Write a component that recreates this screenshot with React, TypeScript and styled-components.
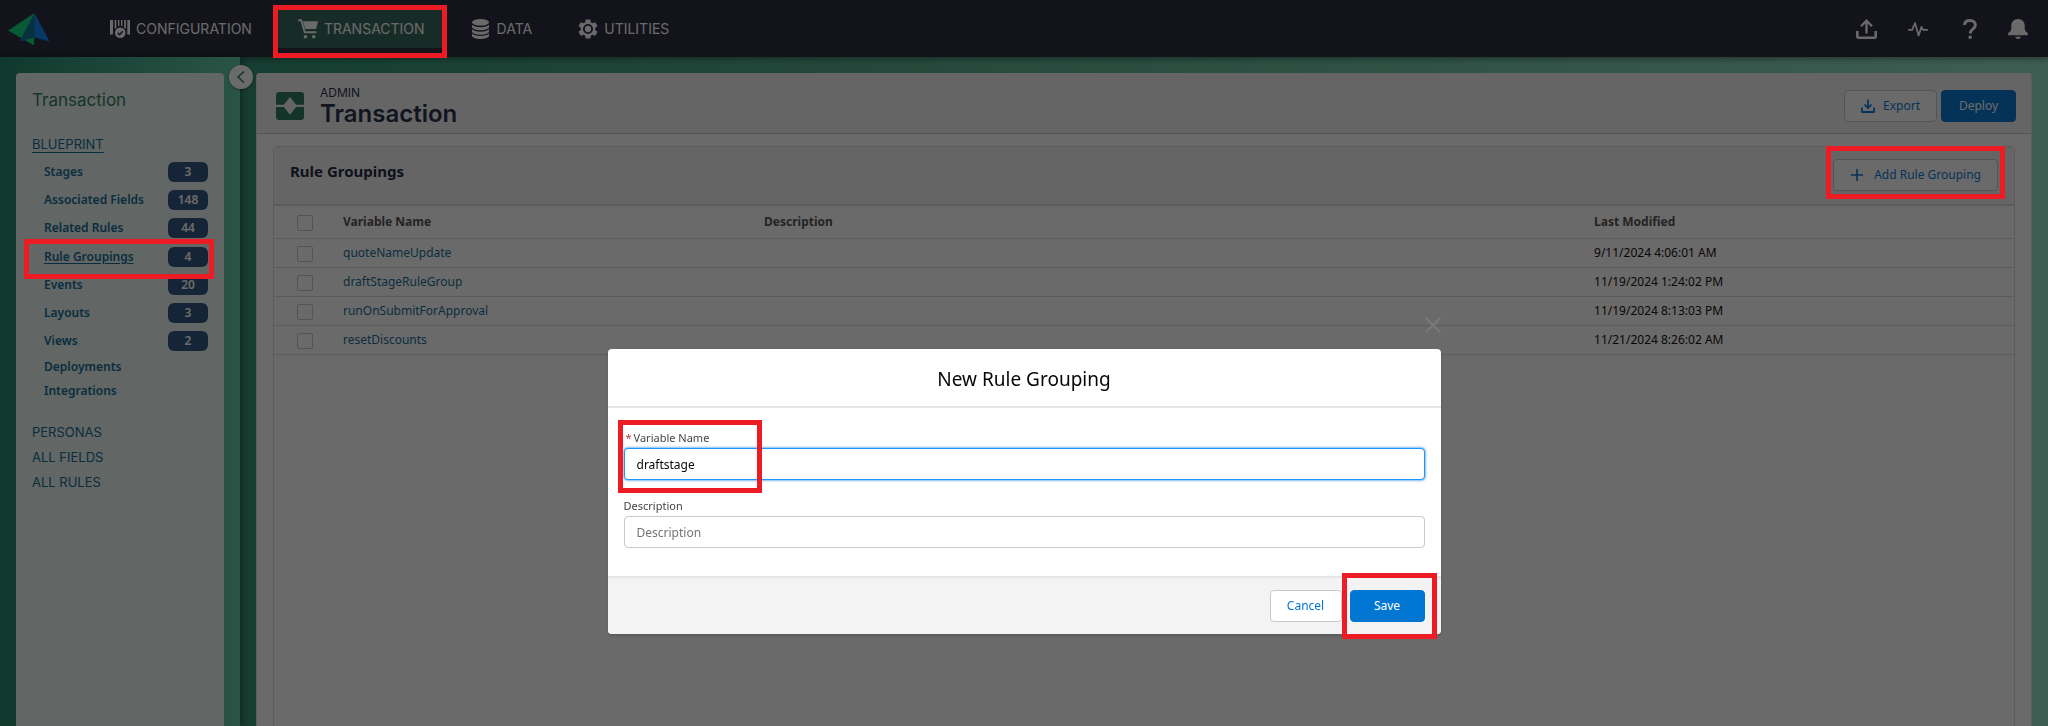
import React, { useState } from 'react';
import styled, { createGlobalStyle, css } from 'styled-components';

const textFont = '"Noto Sans", "Open Sans", sans-serif';
const brandFont = 'Inter, "Open Sans", sans-serif';

const color = {
  navy: '#21263a',
  link: '#0c6894',
  brand: '#0176d3',
  green: '#27795e',
  line: '#dddbda',
  control: '#c9c9c9',
  grey: '#f3f3f3',
  mark: '#ed1c24',
};

const GlobalStyle = createGlobalStyle`
  *, *::before, *::after { box-sizing: border-box; }
  body { margin: 0; font: 12px/16px ${textFont}; color: #080707; }
  h1, h2, h3, p, ul { margin: 0; padding: 0; font-weight: inherit; }
  ul { list-style: none; }
  button, input { font: inherit; margin: 0; }
  a { text-decoration: none; color: inherit; }
`;

const Page = styled.div`
  height: 100vh;
  display: flex;
  flex-direction: column;
  overflow: hidden;
`;

const Mark = styled.span<{ $inset: string }>`
  position: absolute;
  inset: ${p => p.$inset};
  border: 5px solid ${color.mark};
  z-index: 20;
  pointer-events: none;
`;

const FieldMark = styled(Mark)`
  width: 144px;
`;

/* Top bar */

const TopBar = styled.header`
  position: relative;
  flex: none;
  display: flex;
  align-items: center;
  height: 57px;
  padding: 0 20px 0 8px;
  background: ${color.navy};
  color: #fff;
  box-shadow: 0 2px 6px rgba(0, 0, 0, 0.4);
`;

const Logo = styled.a`
  display: flex;
  width: 82px;
`;

const MainNav = styled.nav`
  display: flex;
  gap: 7px;
  flex: 1;
`;

const NavLink = styled.a<{ $active?: boolean }>`
  position: relative;
  display: flex;
  align-items: center;
  gap: 6px;
  height: 38px;
  padding: 0 19px 0 20px;
  font: 14px/20px ${brandFont};
  background: ${p => (p.$active ? '#2d6557' : 'transparent')};
`;

const Tools = styled.div`
  display: flex;
  align-items: center;
  gap: 31px;
`;

const ToolButton = styled.button`
  display: flex;
  padding: 0;
  border: 0;
  background: none;
  color: inherit;
`;

/* Sidebar */

const Body = styled.div`
  flex: 1;
  min-height: 0;
  display: flex;
  background: linear-gradient(90deg, #1b8060, #2a8f70 12%, #57b391 50%, #8edfc6);
`;

const Side = styled.aside`
  position: relative;
  flex: none;
  width: 240px;
  padding: 16px 16px 0;
  display: flex;
  background: linear-gradient(90deg, #198564, #5cc8a5);
  box-shadow: 2px 0 6px rgba(0, 0, 0, 0.35);
`;

const SideCard = styled.div`
  flex: 1;
  padding: 15px 16px;
  border-radius: 4px 4px 0 0;
  background: #e8f5f0;
  color: ${color.link};
`;

const SideTitle = styled.h2`
  margin-bottom: 20px;
  font: 17px/24px ${brandFont};
  color: ${color.green};
`;

const SideSection = styled.a<{ $active?: boolean }>`
  display: block;
  font: 13px/25px ${brandFont};
  text-decoration: ${p => (p.$active ? 'underline' : 'none')};
  text-underline-offset: 3px;
`;

const SideList = styled.ul`
  padding: 1px 0 17px 12px;
`;

const SideItem = styled.li<{ $counted: boolean; $active: boolean }>`
  position: relative;
  display: flex;
  align-items: center;
  justify-content: space-between;
  height: ${p => (p.$active ? 29 : p.$counted ? 28 : 24)}px;
`;

const SideLink = styled.a<{ $active?: boolean }>`
  font-weight: 600;
  text-decoration: ${p => (p.$active ? 'underline' : 'none')};
  text-underline-offset: 2px;
`;

const Count = styled.span`
  width: 40px;
  border-radius: 6px;
  background: #2a5480;
  color: #fff;
  font-weight: 600;
  line-height: 20px;
  text-align: center;
`;

const Collapse = styled.button`
  position: absolute;
  top: 8px;
  right: -13px;
  z-index: 1;
  display: grid;
  place-items: center;
  width: 24px;
  height: 24px;
  padding: 0;
  border: 0;
  border-radius: 50%;
  background: #fff;
  color: ${color.green};
  box-shadow: 0 1px 3px rgba(0, 0, 0, 0.4);
`;

/* Main content */

const Main = styled.main`
  flex: 1;
  min-width: 0;
  display: flex;
  padding: 16px 16px 0;
`;

const Card = styled.section`
  flex: 1;
  display: flex;
  flex-direction: column;
  border: solid ${color.line};
  border-width: 0 1px;
  border-radius: 4px 4px 0 0;
  background: #fff;
  overflow: hidden;
`;

const CardHeader = styled.header`
  display: flex;
  align-items: center;
  height: 61px;
  padding: 5px 15px 0 19px;
  border-bottom: 1px solid ${color.control};
  background: ${color.grey};
`;

const Titles = styled.div`
  flex: 1;
  padding-left: 16px;
  font-family: ${brandFont};
  color: #1c2c48;
`;

const Eyebrow = styled.p`
  font-size: 12px;
  line-height: 16px;
`;

const PageTitle = styled.h1`
  font-size: 24px;
  font-weight: 600;
  line-height: 26px;
`;

const Actions = styled.div`
  display: flex;
  gap: 4px;
`;

const Button = styled.button<{ $primary?: boolean }>`
  display: inline-flex;
  align-items: center;
  gap: 8px;
  height: 32px;
  padding: 0 16px;
  border: 1px solid ${color.control};
  border-radius: 4px;
  background: #fff;
  color: ${color.brand};
  line-height: 16px;
  white-space: nowrap;
  ${p =>
    p.$primary &&
    css`
      justify-content: center;
      min-width: 75px;
      border-color: ${color.brand};
      background: ${color.brand};
      color: #fff;
    `}
`;

const AddButton = styled(Button)`
  gap: 10px;
`;

const CancelButton = styled(Button)`
  justify-content: center;
  min-width: 72px;
`;

const Panel = styled.div`
  flex: 1;
  margin: 12px 16px 0;
  border: 1px solid ${color.line};
  border-bottom: 0;
  border-radius: 4px 4px 0 0;
`;

const PanelHeader = styled.div`
  display: flex;
  align-items: flex-start;
  justify-content: space-between;
  padding: 12px 16px 13px;
  border-bottom: 2px solid ${color.line};
  background: ${color.grey};
`;

const PanelTitle = styled.h2`
  font-size: 15px;
  font-weight: 700;
  line-height: 25px;
  color: #16243c;
`;

const Anchor = styled.div`
  position: relative;
  display: flex;
`;

const Table = styled.table`
  width: 100%;
  table-layout: fixed;
  border-collapse: collapse;
`;

const HeadCell = styled.th<{ $width: string }>`
  width: ${p => p.$width};
  height: 32px;
  padding: 0;
  border-bottom: 1px solid ${color.line};
  color: #514f4d;
  font-weight: 700;
  text-align: left;
`;

const Cell = styled.td`
  height: 29px;
  padding: 0;
  border-bottom: 1px solid ${color.line};
`;

const CheckBox = styled.input.attrs({ type: 'checkbox' })`
  display: block;
  appearance: none;
  width: 16px;
  height: 16px;
  margin: 2px 0 0 23px;
  border: 1px solid ${color.control};
  border-radius: 2px;
  background: #fff;
`;

const TableLink = styled.a`
  color: ${color.link};
`;

/* Dialog */

const Backdrop = styled.div`
  position: fixed;
  inset: 0;
  z-index: 10;
  display: flex;
  align-items: flex-start;
  justify-content: center;
  padding-top: 349px;
  background: rgba(8, 7, 7, 0.6);
`;

const Dialog = styled.div`
  position: relative;
  width: 833px;
  max-width: 90%;
  border-radius: 4px;
  background: #fff;
  box-shadow: 0 2px 3px rgba(0, 0, 0, 0.16);
`;

const Close = styled.button`
  position: absolute;
  top: -32px;
  right: 0;
  display: flex;
  padding: 0;
  border: 0;
  background: none;
  color: #7b7a7a;
`;

const DialogTitle = styled.h2`
  padding: 18px 16px 14px;
  border-bottom: 2px solid #e5e5e5;
  font-size: 19px;
  line-height: 25px;
  text-align: center;
`;

const Form = styled.div`
  display: grid;
  gap: 18px;
  padding: 22px 16px 28px;
`;

const Field = styled.div`
  position: relative;
  display: grid;
  gap: 2px;
`;

const Label = styled.label`
  color: #444;
  font-size: 11px;
  line-height: 16px;
`;

const Required = styled.abbr`
  margin: 0 2px;
  color: #c23934;
  text-decoration: none;
`;

const TextInput = styled.input<{ $focused?: boolean }>`
  width: 100%;
  height: 32px;
  padding: 0 12px;
  border: 1px solid ${p => (p.$focused ? '#1b96ff' : color.control)};
  border-radius: 4px;
  background: #fff;
  color: #080707;
  outline: 0;
  box-shadow: ${p => (p.$focused ? '0 0 3px #0176d3' : 'none')};
  &::placeholder { color: #747474; opacity: 1; }
`;

const DialogFooter = styled.footer`
  display: flex;
  justify-content: flex-end;
  gap: 8px;
  padding: 12px 16px;
  border-top: 2px solid #e5e5e5;
  border-radius: 0 0 4px 4px;
  background: ${color.grey};
`;

/* Icons */

const LogoIcon = () => (
  <svg width="42" height="34" viewBox="0 0 42 34" aria-hidden="true">
    <path d="M0 18.500L26.500 1 25.500 33 17.500 28.500z" fill="#08d879" />
    <path d="M26.500 1L41.500 29.500 26.500 25.500 11.500 29.500z" fill="#0a80f8" />
    <path d="M26.500 1V25.500L12 29 16 21.500z" fill="#067294" />
    <path d="M17.500 28L26.500 25.500 25.500 33z" fill="#08d879" />
  </svg>
);

const ConfigIcon = () => (
  <svg width="20" height="20" viewBox="0 0 20 20" fill="currentColor" aria-hidden="true">
    <path d="M0 1h3v14.500H0zM17.300 1h3v14.500h-3zM4.600 1h1.700v8.500H4.600zM8 1h1.400v6H8zM11 1h1.400v6H11zM14.200 1h1.700v8.500h-1.700z" />
    <circle cx="10.200" cy="13.800" r="5.300" />
    <path d="M7.800 13.900l1.800 1.800 3.200-3.400" fill="none" stroke={color.navy} strokeWidth="1.500" />
  </svg>
);

const CartIcon = () => (
  <svg width="20" height="20" viewBox="0 0 20 20" fill="currentColor" aria-hidden="true">
    <path d="M5 2.200h14.400c.4 0 .6.300.5.700l-1.700 6.600c-.1.400-.4.600-.8.600H7.200z" />
    <path d="M.8 1.300h2c.4 0 .7.200.8.600L6.700 13.200h11" fill="none" stroke="currentColor" strokeWidth="1.900" strokeLinecap="round" strokeLinejoin="round" />
    <circle cx="7.500" cy="17.700" r="1.800" />
    <circle cx="15.700" cy="17.700" r="1.800" />
  </svg>
);

const DataIcon = () => (
  <svg width="20" height="20" viewBox="0 0 20 20" fill="currentColor" aria-hidden="true">
    <ellipse cx="9.500" cy="3.300" rx="8.500" ry="3.300" />
    <path d="M1 5.700c1.500 1.600 4.600 2.500 8.500 2.500s7-.9 8.500-2.500v2.200c0 1.800-3.800 3.300-8.500 3.300S1 9.700 1 7.900z" />
    <path d="M1 10.200c1.500 1.600 4.600 2.500 8.500 2.500s7-.9 8.500-2.500v2.200c0 1.800-3.800 3.300-8.500 3.300S1 14.200 1 12.400z" />
    <path d="M1 14.600c1.500 1.600 4.600 2.500 8.500 2.500s7-.9 8.500-2.500v2.100c0 1.800-3.800 3.300-8.500 3.300S1 18.500 1 16.700z" />
  </svg>
);

const GearIcon = () => (
  <svg width="20" height="20" viewBox="2 2 20 20" aria-hidden="true">
    <path
      fill="currentColor"
      d="M19.140 12.940c.04-.3.06-.61.06-.94 0-.32-.02-.64-.07-.94l2.030-1.580c.18-.14.23-.41.12-.61l-1.920-3.320c-.12-.22-.37-.29-.59-.22l-2.390.96c-.5-.38-1.030-.7-1.620-.94l-.36-2.540c-.04-.24-.24-.41-.48-.41h-3.840c-.24 0-.43.17-.47.41l-.36 2.540c-.59.24-1.130.57-1.620.94l-2.390-.96c-.22-.08-.47 0-.59.22L2.740 8.870c-.12.21-.08.47.12.61l2.030 1.580c-.05.3-.09.63-.09.94s.02.64.07.94l-2.030 1.580c-.18.14-.23.41-.12.61l1.920 3.320c.12.22.37.29.59.22l2.390-.96c.5.38 1.030.7 1.620.94l.36 2.540c.05.24.24.41.48.41h3.840c.24 0 .44-.17.47-.41l.36-2.540c.59-.24 1.130-.56 1.620-.94l2.390.96c.22.08.47 0 .59-.22l1.920-3.320c.12-.22.07-.47-.12-.61l-2.010-1.580z"
    />
    <circle cx="12" cy="12" r="4.100" fill="none" stroke={color.navy} strokeWidth="1.900" />
  </svg>
);

const ShareIcon = () => (
  <svg width="21" height="20" viewBox="0 0 21 20" fill="none" stroke="currentColor" aria-hidden="true">
    <path d="M1.300 12v5.300c0 .9.500 1.400 1.400 1.400h15.600c.9 0 1.400-.5 1.400-1.400V12" strokeWidth="2.600" />
    <path d="M10.500 14.500V2M5 7.200l5.500-5.500L16 7.200" strokeWidth="2.300" />
  </svg>
);

const PulseIcon = () => (
  <svg width="20" height="20" viewBox="0 0 20 20" fill="none" stroke="currentColor" strokeWidth="1.800" strokeLinejoin="round" strokeLinecap="round" aria-hidden="true">
    <path d="M.8 10.800h3.400L7 4l3.600 12.500L13.500 8l1.600 2.800h4.100" />
  </svg>
);

const HelpIcon = () => (
  <svg width="18" height="20" viewBox="-4 0 18 20" fill="none" stroke="currentColor" aria-hidden="true">
    <path d="M1.500 6C1.600 3.200 3.800 1.500 7 1.500s5.400 1.800 5.400 4.500c0 4-5.100 3.700-5.100 8.500" strokeWidth="2.900" />
    <circle cx="7.200" cy="18.200" r="1.800" fill="currentColor" stroke="none" />
  </svg>
);

const BellIcon = () => (
  <svg width="20" height="20" viewBox="0 0 20 20" fill="currentColor" aria-hidden="true">
    <path d="M10 0C6 0 3.300 2.900 3.300 6.600v3.200c0 1.500-.9 2.700-2.500 3.700-1.200.8-1 2.800.5 2.800h17.400c1.500 0 1.700-2 .5-2.800-1.600-1-2.500-2.200-2.500-3.700V6.600C16.700 2.900 14 0 10 0z" />
    <path d="M7.200 17.800h5.600c-.3 1.400-1.400 2.200-2.800 2.200s-2.500-.8-2.800-2.200z" />
  </svg>
);

const TransactionIcon = () => (
  <svg width="28" height="28" viewBox="0 0 28 28" aria-hidden="true">
    <path d="M3 0h22a3 3 0 0 1 3 3v9.700H0V3a3 3 0 0 1 3-3zM0 15h28v10a3 3 0 0 1-3 3H3a3 3 0 0 1-3-3z" fill={color.green} />
    <path d="M14 5l7 8.900-7 8.900-7-8.900z" fill={color.grey} />
  </svg>
);

const DownloadIcon = () => (
  <svg width="14" height="14" viewBox="0 0 14 14" fill="none" stroke="currentColor" aria-hidden="true">
    <path d="M1 8.500V13h12V8.500" strokeWidth="1.800" strokeLinejoin="round" />
    <path d="M7 .5v8M3.500 5.500L7 9l3.500-3.500" strokeWidth="1.700" />
  </svg>
);

const PlusIcon = () => (
  <svg width="14" height="14" viewBox="0 0 14 14" fill="none" stroke="currentColor" strokeWidth="1.600" strokeLinecap="round" aria-hidden="true">
    <path d="M7 1.500v11M1.500 7h11" />
  </svg>
);

const ChevronIcon = () => (
  <svg width="12" height="12" viewBox="0 0 12 12" fill="none" stroke="currentColor" strokeWidth="1.600" aria-hidden="true">
    <path d="M9 .5L3 6l6 5.500" />
  </svg>
);

const CloseIcon = () => (
  <svg width="16" height="16" viewBox="0 0 16 16" fill="none" stroke="currentColor" strokeWidth="2" strokeLinecap="round" aria-hidden="true">
    <path d="M1.200 1.200l13.600 13.600M14.800 1.200L1.200 14.800" />
  </svg>
);

const blueprint: { name: string; count?: number }[] = [
  { name: 'Stages', count: 3 },
  { name: 'Associated Fields', count: 148 },
  { name: 'Related Rules', count: 44 },
  { name: 'Rule Groupings', count: 4 },
  { name: 'Events', count: 20 },
  { name: 'Layouts', count: 3 },
  { name: 'Views', count: 2 },
  { name: 'Deployments' },
  { name: 'Integrations' },
];

const groupings = [
  { name: 'quoteNameUpdate', modified: '9/11/2024 4:06:01 AM' },
  { name: 'draftStageRuleGroup', modified: '11/19/2024 1:24:02 PM' },
  { name: 'runOnSubmitForApproval', modified: '11/19/2024 8:13:03 PM' },
  { name: 'resetDiscounts', modified: '11/21/2024 8:26:02 AM' },
];

export default function App() {
  const [variableName, setVariableName] = useState('draftstage');
  const [description, setDescription] = useState('');

  return (
    <Page>
      <GlobalStyle />
      <TopBar>
        <Logo href="#" aria-label="Home"><LogoIcon /></Logo>
        <MainNav>
          <NavLink href="#"><ConfigIcon />CONFIGURATION</NavLink>
          <NavLink href="#" $active>
            <CartIcon />TRANSACTION
            <Mark $inset="-5px -3px -10px -5px" />
          </NavLink>
          <NavLink href="#"><DataIcon />DATA</NavLink>
          <NavLink href="#"><GearIcon />UTILITIES</NavLink>
        </MainNav>
        <Tools>
          <ToolButton aria-label="Upload"><ShareIcon /></ToolButton>
          <ToolButton aria-label="Activity"><PulseIcon /></ToolButton>
          <ToolButton aria-label="Help"><HelpIcon /></ToolButton>
          <ToolButton aria-label="Notifications"><BellIcon /></ToolButton>
        </Tools>
      </TopBar>

      <Body>
        <Side>
          <SideCard>
            <SideTitle>Transaction</SideTitle>
            <SideSection href="#" $active>BLUEPRINT</SideSection>
            <SideList>
              {blueprint.map(({ name, count }) => {
                const active = name === 'Rule Groupings';
                return (
                  <SideItem key={name} $counted={count !== undefined} $active={active}>
                    <SideLink href="#" $active={active}>{name}</SideLink>
                    {count !== undefined && <Count>{count}</Count>}
                    {active && <Mark $inset="-3px -6px -8px -20px" />}
                  </SideItem>
                );
              })}
            </SideList>
            <SideSection href="#">PERSONAS</SideSection>
            <SideSection href="#">ALL FIELDS</SideSection>
            <SideSection href="#">ALL RULES</SideSection>
          </SideCard>
          <Collapse aria-label="Collapse sidebar"><ChevronIcon /></Collapse>
        </Side>

        <Main>
          <Card>
            <CardHeader>
              <TransactionIcon />
              <Titles>
                <Eyebrow>ADMIN</Eyebrow>
                <PageTitle>Transaction</PageTitle>
              </Titles>
              <Actions>
                <Button><DownloadIcon />Export</Button>
                <Button $primary>Deploy</Button>
              </Actions>
            </CardHeader>
            <Panel>
              <PanelHeader>
                <PanelTitle>Rule Groupings</PanelTitle>
                <Anchor>
                  <AddButton><PlusIcon />Add Rule Grouping</AddButton>
                  <Mark $inset="-13px -7px -8px" />
                </Anchor>
              </PanelHeader>
              <Table>
                <thead>
                  <tr>
                    <HeadCell $width="69px"><CheckBox aria-label="Select all" /></HeadCell>
                    <HeadCell $width="24.2%">Variable Name</HeadCell>
                    <HeadCell $width="47.7%">Description</HeadCell>
                    <HeadCell $width="auto">Last Modified</HeadCell>
                  </tr>
                </thead>
                <tbody>
                  {groupings.map(row => (
                    <tr key={row.name}>
                      <Cell><CheckBox aria-label={`Select ${row.name}`} /></Cell>
                      <Cell><TableLink href="#">{row.name}</TableLink></Cell>
                      <Cell />
                      <Cell>{row.modified}</Cell>
                    </tr>
                  ))}
                </tbody>
              </Table>
            </Panel>
          </Card>
        </Main>
      </Body>

      <Backdrop>
        <Dialog role="dialog" aria-labelledby="dialog-title">
          <Close aria-label="Close"><CloseIcon /></Close>
          <DialogTitle id="dialog-title">New Rule Grouping</DialogTitle>
          <Form>
            <Field>
              <Label htmlFor="variable-name"><Required>*</Required>Variable Name</Label>
              <TextInput id="variable-name" $focused value={variableName} onChange={e => setVariableName(e.target.value)} />
              <FieldMark $inset="-10px auto -13px -6px" />
            </Field>
            <Field>
              <Label htmlFor="description">Description</Label>
              <TextInput id="description" placeholder="Description" value={description} onChange={e => setDescription(e.target.value)} />
            </Field>
          </Form>
          <DialogFooter>
            <CancelButton>Cancel</CancelButton>
            <Anchor>
              <Button $primary>Save</Button>
              <Mark $inset="-17px -12px -17px -8px" />
            </Anchor>
          </DialogFooter>
        </Dialog>
      </Backdrop>
    </Page>
  );
}
